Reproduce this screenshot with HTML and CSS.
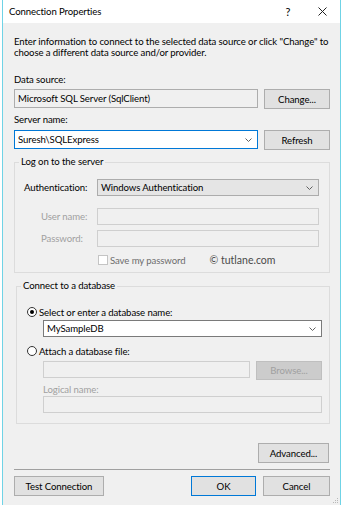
FILE: index.html
```html
<!DOCTYPE html>
<html lang="en">
<head>
  <meta charset="UTF-8" />
  <title>Connection Properties</title>
  <link rel="stylesheet" href="styles.css">
</head>
<body>
  <div class="window">
    <div class="titlebar">
      <span class="title">Connection Properties</span>
      <span class="help">?</span>
      <span class="close">
        <svg width="9" height="9" viewBox="0 0 9 9"><path d="M0.5 0.5 L8.5 8.5 M8.5 0.5 L0.5 8.5" stroke="#222" stroke-width="1" fill="none"/></svg>
      </span>
    </div>

    <div class="content">
      <p class="intro">Enter information to connect to the selected data source or click "Change" to<br>choose a different data source and/or provider.</p>

      <div class="label label-top">Data source:</div>
      <div class="row">
        <div class="field readonly">Microsoft SQL Server (SqlClient)</div>
        <button class="btn">Change...</button>
      </div>

      <div class="label label-server">Server name:</div>
      <div class="row row-server">
        <div class="field combo focused">
          <span>Suresh\SQLExpress</span>
          <svg class="chev" width="7" height="4" viewBox="0 0 7 4"><path d="M0.5 0.5 L3.5 3.5 L6.5 0.5" fill="none" stroke="#606060"/></svg>
        </div>
        <button class="btn">Refresh</button>
      </div>

      <fieldset class="group group-logon">
        <legend>Log on to the server</legend>
        <div class="grow auth-row">
          <span class="grow-label">Authentication:</span>
          <div class="field small combo dropdown">
            <span>Windows Authentication</span>
            <svg class="chev" width="7" height="4" viewBox="0 0 7 4"><path d="M0.5 0.5 L3.5 3.5 L6.5 0.5" fill="none" stroke="#606060"/></svg>
          </div>
        </div>
        <div class="grow user-row">
          <span class="grow-label disabled indent">User name:</span>
          <div class="field small off"></div>
        </div>
        <div class="grow pass-row">
          <span class="grow-label disabled indent">Password:</span>
          <div class="field small off"></div>
        </div>
        <div class="check-row">
          <span class="checkbox"></span>
          <span class="check-text">Save my password</span>
          <span class="watermark">© tutlane.com</span>
        </div>
      </fieldset>

      <fieldset class="group group-db">
        <legend>Connect to a database</legend>
        <div class="radio-row radio-first">
          <span class="radio checked"></span>
          <span>Select or enter a database name:</span>
        </div>
        <div class="indented">
          <div class="field small combo db-combo">
            <span>MySampleDB</span>
            <svg class="chev" width="7" height="4" viewBox="0 0 7 4"><path d="M0.5 0.5 L3.5 3.5 L6.5 0.5" fill="none" stroke="#606060"/></svg>
          </div>
        </div>
        <div class="radio-row radio-second">
          <span class="radio"></span>
          <span>Attach a database file:</span>
        </div>
        <div class="indented row file-row">
          <div class="field small off"></div>
          <button class="btn btn-off">Browse...</button>
        </div>
        <div class="indented label disabled logical-label">Logical name:</div>
        <div class="indented">
          <div class="field small off"></div>
        </div>
      </fieldset>

      <div class="advanced-row">
        <button class="btn btn-advanced">Advanced...</button>
      </div>

      <div class="separator"></div>

      <div class="footer">
        <button class="btn btn-test">Test Connection</button>
        <div class="footer-right">
          <button class="btn btn-ok">OK</button>
          <button class="btn btn-cancel">Cancel</button>
        </div>
      </div>
    </div>

    <svg class="grip" width="6" height="6" viewBox="0 0 6 6">
      <rect x="4" y="0" width="1" height="1" fill="#b8b8b8"/>
      <rect x="2" y="2" width="1" height="1" fill="#b8b8b8"/>
      <rect x="4" y="2" width="1" height="1" fill="#b8b8b8"/>
      <rect x="0" y="4" width="1" height="1" fill="#b8b8b8"/>
      <rect x="2" y="4" width="1" height="1" fill="#b8b8b8"/>
      <rect x="4" y="4" width="1" height="1" fill="#b8b8b8"/>
    </svg>
  </div>
</body>
</html>
```

FILE: styles.css
```css
* {
  box-sizing: border-box;
}

body {
  margin: 0;
  background: #fff;
  font-family: Lato, "Liberation Sans", sans-serif;
  font-size: 9.6px;
  letter-spacing: -0.1px;
  color: #000;
}

.window {
  position: relative;
  margin-left: 2px;
  width: 339px;
  height: 505px;
  border-left: 1px solid #6fd3e6;
  border-right: 1px solid #6fd3e6;
  background: #f0f0f0;
}

.titlebar {
  height: 23px;
  background: #fff;
  display: flex;
  align-items: center;
  padding-left: 6px;
}

.title {
  flex: 1;
}

.help {
  width: 20px;
  margin-right: 6px;
  text-align: center;
  font-size: 11px;
}

.close {
  width: 36px;
  display: flex;
  justify-content: center;
}

.content {
  padding: 0 10px 0 11px;
}

.intro {
  margin: 13px 0 0;
  line-height: 11px;
  white-space: nowrap;
}

.label {
  line-height: 12px;
}

.label-top {
  margin-top: 16px;
}

.label-server {
  margin-top: 5px;
}

.row {
  display: flex;
  gap: 6px;
  margin-top: 3px;
}

.row-server {
  margin-top: 4px;
}

.field {
  flex: 1;
  height: 19px;
  border: 1px solid #adadad;
  padding-left: 3px;
  display: flex;
  align-items: center;
  white-space: nowrap;
}

.field.small {
  height: 17px;
}

.readonly {
  background: #f0f0f0;
}

.combo {
  justify-content: space-between;
  padding-right: 5px;
}

.focused {
  background: #fff;
  border-color: #0078d7;
}

.dropdown {
  background: #e5e5e5;
  border-color: #acacac;
}

.db-combo {
  background: #fff;
  border-color: #7a7a7a;
}

.off {
  background: #f0f0f0;
  border-color: #cfcfcf;
}

.btn {
  width: 66px;
  height: 20px;
  padding: 0;
  border: 1px solid #adadad;
  background: #e1e1e1;
  font-family: inherit;
  font-size: inherit;
  letter-spacing: inherit;
  color: #000;
}

.btn-off {
  height: 19px;
  background: #cccccc;
  border-color: #bfbfbf;
  color: #a0a0a0;
}

/* group boxes */
.group {
  margin: 6px 0 0;
  padding: 0 10px 6px 9px;
  border: 1px solid #dcdcdc;
  min-width: 0;
}

.group legend {
  margin-left: -5px;
  padding: 0 2px;
  line-height: 12px;
}

.grow {
  display: flex;
  align-items: center;
}

.grow-label {
  width: 73px;
}

.indent {
  padding-left: 17px;
}

.disabled {
  color: #a0a0a0;
}

.auth-row {
  margin-top: 11px;
}

.user-row {
  margin-top: 12px;
}

.pass-row {
  margin-top: 5px;
}

.check-row {
  display: flex;
  align-items: center;
  height: 12px;
  margin-top: 7px;
  padding-left: 74px;
}

.checkbox {
  width: 10px;
  height: 10px;
  border: 1px solid #c4c4c4;
  background: #fff;
  margin-right: 2px;
}

.check-text {
  color: #6d6d6d;
}

.watermark {
  margin-left: 24px;
  font-size: 10.5px;
  letter-spacing: 0;
  color: #4a4a4a;
}

.group-db {
  margin: 7px 0 0 2px;
  padding: 0 7px 10px 10px;
}

.group-db legend {
  margin-left: -6px;
}

.radio-row {
  display: flex;
  align-items: center;
  height: 12px;
  gap: 2px;
}

.radio-first {
  margin-top: 14px;
}

.radio-second {
  margin-top: 8px;
}

.radio {
  width: 10px;
  height: 10px;
  border: 1px solid #333;
  border-radius: 50%;
  background: #fff;
  display: flex;
  align-items: center;
  justify-content: center;
}

.radio.checked::after {
  content: "";
  width: 4px;
  height: 4px;
  border-radius: 50%;
  background: #000;
}

.indented {
  margin-left: 16px;
}

.indented .field {
  width: 100%;
}

.db-combo {
  margin-top: 2px;
}

.file-row {
  margin-top: 4px;
}

.logical-label {
  margin-top: 4px;
}

.advanced-row {
  display: flex;
  justify-content: flex-end;
  margin-top: 19px;
}

.btn-advanced {
  width: 71px;
  margin-right: 1px;
}

.separator {
  margin-top: 6px;
  height: 1px;
  background: #a0a0a0;
}

.footer {
  display: flex;
  justify-content: space-between;
  margin-top: 6px;
}

.btn-test {
  width: 90px;
}

.footer-right {
  display: flex;
  gap: 7px;
}

.btn-ok {
  width: 65px;
  border-color: #0078d7;
}

.btn-cancel {
  width: 67px;
}

.grip {
  position: absolute;
  right: 1px;
  bottom: 1px;
}
```
